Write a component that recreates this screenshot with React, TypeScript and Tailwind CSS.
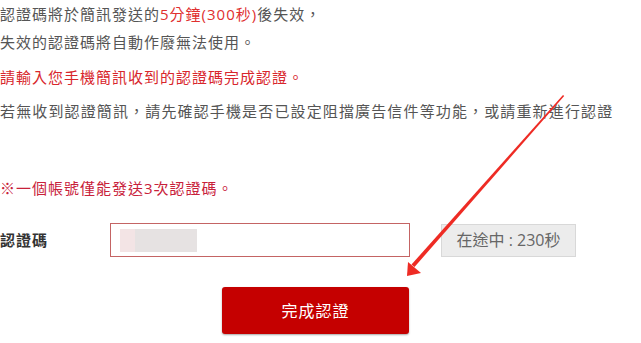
const font = {
  fontFamily: '"Open Sans", "Noto Sans CJK TC", sans-serif',
};

export default function App() {
  return (
    <div
      className="relative w-[641px] h-[343px] overflow-hidden bg-white text-[15px] tracking-[1px] text-[#555]"
      style={font}
    >
      <div className="flex flex-col">
        <p className="leading-[28px]">
          認證碼將於簡訊發送的<span className="text-[#e0302f]">5分鐘(300秒)</span>後失效，
          <br />
          失效的認證碼將自動作廢無法使用。
        </p>
        <p className="mt-[7px] leading-[28px] text-[#d8262c]">
          請輸入您手機簡訊收到的認證碼完成認證。
        </p>
        <p className="mt-[6px] leading-[28px] whitespace-nowrap tracking-[1.14px]">
          若無收到認證簡訊，請先確認手機是否已設定阻擋廣告信件等功能，或請重新進行認證
        </p>
        <p className="mt-[49px] leading-[28px] text-[#c8213a]">
          ※一個帳號僅能發送3次認證碼。
        </p>

        <div className="mt-[21px] flex items-center">
          <label className="w-[110px] font-bold text-[#333]">認證碼</label>
          <div className="w-[300px] h-[34px] border border-[#c46464] bg-white flex items-center px-[9px]">
            <div className="flex h-[23px]">
              <div className="w-[15px] bg-[#f3e4e5]" />
              <div className="w-[62px] bg-[#e6e2e2]" />
            </div>
          </div>
          <div className="ml-[31px] w-[135px] h-[33px] border border-[#d8d8d8] bg-[#ececec] flex items-center justify-center text-[16px] tracking-normal text-[#666]">
            在途中 : 230秒
          </div>
        </div>

        <button className="mt-[30px] ml-[222px] w-[187px] h-[47px] rounded-[3px] bg-[#c50000] text-white text-[16px] shadow-[0_1px_2px_rgba(0,0,0,0.35)]">
          完成認證
        </button>
      </div>

      <svg
        className="absolute left-0 top-0 pointer-events-none"
        width="641"
        height="343"
        viewBox="0 0 641 343"
      >
        <polygon
          points="563,95 564.2,96 414.5,267 411.5,264.5"
          fill="#ee2b24"
        />
        <polygon points="407,276 408,262 421,273" fill="#ee2b24" />
      </svg>
    </div>
  );
}
